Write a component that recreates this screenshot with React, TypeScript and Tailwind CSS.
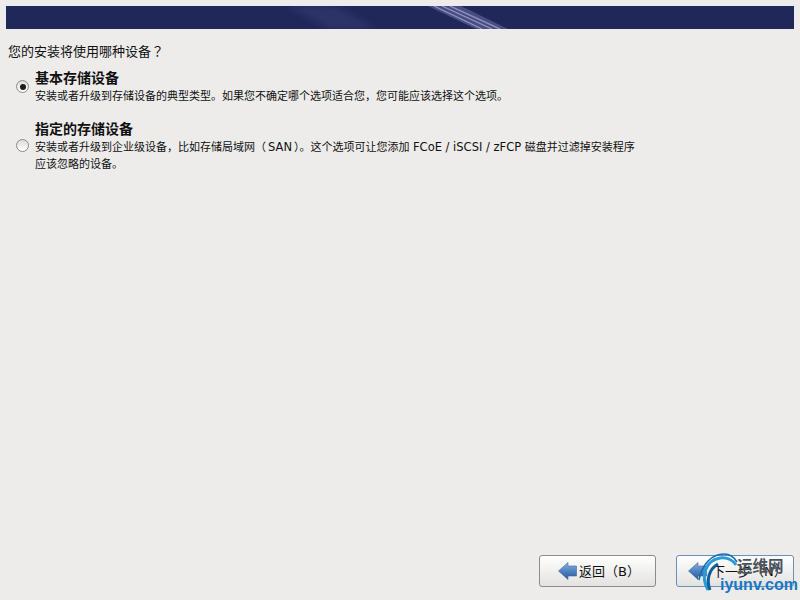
import React from "react";

const font = { fontFamily: '"DejaVu Sans", "Noto Sans CJK SC", sans-serif' };

function P({ children }: { children: React.ReactNode }) {
  return <span style={{ fontFamily: '"Noto Sans CJK TC", sans-serif' }}>{children}</span>;
}

function Radio({ checked }: { checked?: boolean }) {
  return (
    <span className="w-[13px] h-[13px] rounded-full border border-[#8a8a88] bg-gradient-to-b from-[#dddcda] to-white flex items-center justify-center shrink-0">
      {checked && <span className="w-[6px] h-[6px] rounded-full bg-[#1c1c1c]" />}
    </span>
  );
}

function Arrow() {
  return (
    <svg width="19" height="18" viewBox="0 0 19 18" className="shrink-0">
      <defs>
        <linearGradient id="ar" x1="0" y1="0" x2="0" y2="1">
          <stop offset="0" stopColor="#8eb2dd" />
          <stop offset="0.5" stopColor="#4f82bf" />
          <stop offset="1" stopColor="#2a5a98" />
        </linearGradient>
      </defs>
      <path d="M0.5 9 L10 0.5 V4 H18.5 V14 H10 V17.5 Z" fill="url(#ar)" stroke="#3a6aa5" strokeWidth="0.6" strokeLinejoin="round" />
    </svg>
  );
}

export default function App() {
  return (
    <div className="w-[800px] h-[600px] bg-[#edeceb] text-[#111] flex flex-col overflow-hidden relative" style={font}>
      <div className="mt-[6px] mx-[6px] h-[23px] shrink-0 relative overflow-hidden bg-[#20285a]">
        <svg width="788" height="23" viewBox="0 0 788 23" className="block">
          <defs>
            <filter id="b1"><feGaussianBlur stdDeviation="3" /></filter>
            <filter id="b2"><feGaussianBlur stdDeviation="0.5" /></filter>
          </defs>
          <polygon points="280,0 330,0 370,23 325,23" fill="#3a4378" opacity="0.45" filter="url(#b1)" />
          <polygon points="422,0 455,0 502,23 470,23" fill="#5a5f96" opacity="0.7" filter="url(#b2)" />
          <polyline points="428,0 476,23" stroke="#a9a8cf" strokeWidth="1.2" fill="none" opacity="0.8" />
          <polyline points="436,0 486,23" stroke="#a9a8cf" strokeWidth="1.2" fill="none" opacity="0.8" />
          <polyline points="444,0 494,23" stroke="#9d9cc6" strokeWidth="1.4" fill="none" opacity="0.8" />
        </svg>
      </div>

      <div className="mt-[13px] ml-[8px] text-[13px] leading-[17px]">您的安装将使用哪种设备<P>？</P></div>

      <div className="mt-[10px] ml-[16px] flex items-start gap-[6px]">
        <div className="mt-[10px] flex"><Radio checked /></div>
        <div>
          <div className="text-[14px] leading-[17px] font-bold">基本存储设备</div>
          <div className="text-[11px] leading-[17px] mt-[1px]">安装或者升级到存储设备的典型类型。如果您不确定哪个选项适合您，您可能应该选择这个选项。</div>
        </div>
      </div>

      <div className="mt-[16px] ml-[16px] flex items-start gap-[6px]">
        <div className="mt-[18px] flex"><Radio /></div>
        <div className="w-[620px]">
          <div className="text-[14px] leading-[17px] font-bold">指定的存储设备</div>
          <div className="text-[11px] leading-[17px]">
            安装或者升级到企业级设备，比如存储局域网<P>（</P><span className="text-[11.5px] px-[2px]">SAN</span><P>）</P>。这个选项可让您添加 <span className="text-[11.5px]">FCoE / iSCSI / zFCP</span> 磁盘并过滤掉安装程序
            <br />
            应该忽略的设备。
          </div>
        </div>
      </div>

      <div className="mt-auto mb-[13px] mr-[6px] flex justify-end gap-[20px]">
        <button className="w-[117px] h-[32px] rounded-[3px] border border-[#8c8c8a] bg-gradient-to-b from-white to-[#e3e2e0] flex items-center pl-[18px] gap-[2px] text-[13px]">
          <Arrow />
          <span>返回<P>（</P>B<P>）</P></span>
        </button>
        <button className="w-[118px] h-[32px] rounded-[3px] border border-[#6f8fb5] bg-gradient-to-b from-white to-[#e3e2e0] flex items-center pl-[11px] gap-[5px] text-[13px]">
          <Arrow />
          <span>下一步<P>（</P>N<P>）</P></span>
        </button>
      </div>

      <div className="absolute left-[696px] top-[552px] w-[104px] h-[48px]">
        <svg width="104" height="48" viewBox="0 0 104 48" className="absolute left-0 top-0">
          <path d="M3 28 C6 12 16 2 28 2 C34 2 38 5 41 10" fill="none" stroke="#0f6fb3" strokeWidth="1.6" />
          <path d="M12 38 C4 24 10 8 24 6 C31 5 37 8 40 13" fill="none" stroke="#2a9bd8" strokeWidth="3" />
          <path d="M14 38 C10 28 13 17 22 12" fill="none" stroke="#0d5f9e" strokeWidth="3" />
        </svg>
        <span className="absolute left-[41px] top-[4px] text-[15.5px] leading-[19px] font-bold text-[#4b535c]" style={{ fontFamily: '"Noto Sans CJK SC", sans-serif' }}>运维网</span>
        <span className="absolute left-[24px] top-[25px] text-[16px] leading-[16px] font-bold text-[#1878c4] whitespace-nowrap" style={{ fontFamily: '"Liberation Sans", sans-serif' }}>iyunv.com</span>
      </div>
    </div>
  );
}
